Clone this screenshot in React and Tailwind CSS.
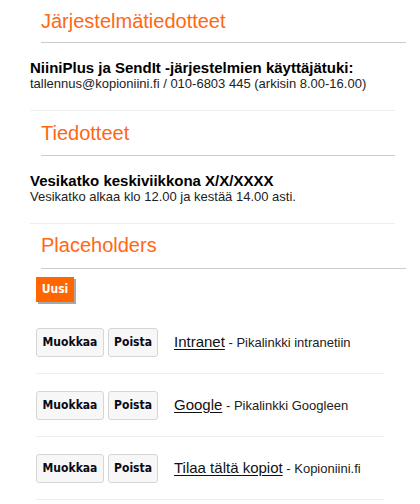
import React from 'react';

const LINKS = [
  { title: 'Intranet', desc: 'Pikalinkki intranetiin' },
  { title: 'Google', desc: 'Pikalinkki Googleen' },
  { title: 'Tilaa tältä kopiot', desc: 'Kopioniini.fi' },
];

const SectionTitle = ({ children, lineW = 'w-[365px]', pt = 'pt-[9px]', pb = 'pb-[9px]' }) => (
  <h2
    className={`ml-[41px] ${lineW} ${pt} ${pb} border-b border-[#cccccc] text-[20px] leading-[24px] text-[#ff6714]`}
  >
    {children}
  </h2>
);

const Notice = ({ title, text }) => (
  <div className="ml-[30px] w-[365px] pt-[16px] pb-[18px] border-b border-[#eeeeee]">
    <p className="text-[15px] leading-[17px] font-bold text-black">{title}</p>
    <p className="text-[13px] leading-[16px] text-[#222]">{text}</p>
  </div>
);

const GrayButton = ({ children, w }) => (
  <button
    className={`${w} h-[29px] rounded-[3px] border border-[#d6d6d6] bg-[#f7f7f7] font-['DejaVu_Sans_Condensed','DejaVu_Sans',Verdana,sans-serif] text-[12px] font-bold text-[#0a0a14]`}
  >
    {children}
  </button>
);

export default function App() {
  return (
    <div className="w-[420px] min-h-[504px] bg-white font-['Liberation_Sans',Arial,sans-serif] text-black">
      <SectionTitle>Järjestelmätiedotteet</SectionTitle>
      <Notice
        title="NiiniPlus ja SendIt -järjestelmien käyttäjätuki:"
        text="tallennus@kopioniini.fi / 010-6803 445 (arkisin 8.00-16.00)"
      />

      <SectionTitle lineW="w-[354px]" pt="pt-[10px]" pb="pb-[10px]">
        Tiedotteet
      </SectionTitle>
      <Notice
        title="Vesikatko keskiviikkona X/X/XXXX"
        text="Vesikatko alkaa klo 12.00 ja kestää 14.00 asti."
      />

      <SectionTitle pt="pt-[9px]" pb="pb-[11px]">Placeholders</SectionTitle>

      <div className="ml-[36px] pt-[7px] pb-[9px]">
        <button className="w-[38px] h-[25px] bg-[#ff6600] shadow-[2px_2px_0_#a8a8a8] font-['DejaVu_Sans_Condensed','DejaVu_Sans',Verdana,sans-serif] text-[12px] font-bold text-white">
          Uusi
        </button>
      </div>

      <div className="ml-[36px] w-[348px]">
        {LINKS.map((l) => (
          <div key={l.title} className="flex items-center pt-[17px] pb-[16px] border-b border-[#eeeeee]">
            <div className="flex gap-[4px]">
              <GrayButton w="w-[68px]">Muokkaa</GrayButton>
              <GrayButton w="w-[50px]">Poista</GrayButton>
            </div>
            <div className="ml-[16px] flex items-baseline">
              <a href="#" className="text-[15px] text-[#111] underline underline-offset-2">
                {l.title}
              </a>
              <span className="text-[13px] text-[#222]">&nbsp;- {l.desc}</span>
            </div>
          </div>
        ))}
      </div>
    </div>
  );
}
